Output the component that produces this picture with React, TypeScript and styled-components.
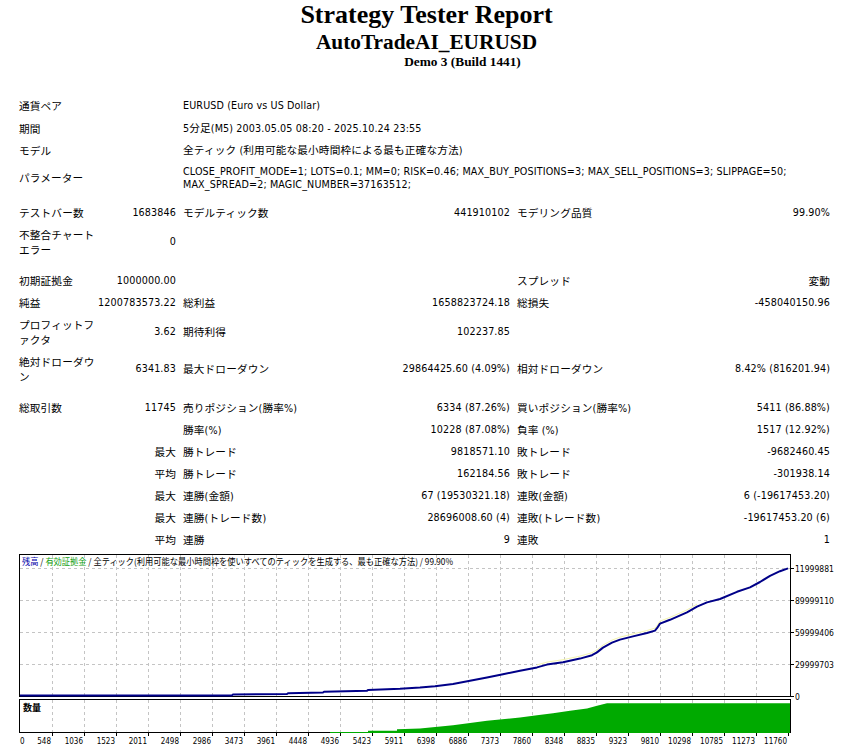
import React from "react";
import styled, { createGlobalStyle } from "styled-components";

const GlobalStyle = createGlobalStyle`
  html, body {
    margin: 0;
    padding: 0;
    background: #ffffff;
  }
  body {
    width: 853px;
    height: 752px;
    overflow: hidden;
    color: #000000;
    font-family: "DejaVu Sans Condensed", "Noto Sans CJK JP", sans-serif;
  }
`;

const Page = styled.div`
  width: 853px;
`;

const Header = styled.header`
  text-align: center;
  font-family: "Liberation Serif", "Times New Roman", serif;
  font-weight: bold;
`;

const Title = styled.div`
  font-size: 26px;
  line-height: 30px;
`;

const Subtitle = styled.div`
  font-size: 21.33px;
  line-height: 24px;
`;

const Build = styled.div`
  font-size: 13.33px;
  line-height: 16px;
  padding-left: 72px;
`;

const Table = styled.div`
  margin: 24px 0 0 16px;
  width: 820px;
  font-size: 10.6667px;
  letter-spacing: 0.13px;
`;

const Row = styled.div<{ $h: number }>`
  display: grid;
  grid-template-columns: 82px 82px 120px 214px 126px 1fr;
  height: ${(p) => p.$h}px;
  align-items: center;
`;

const Spacer = styled.div<{ $h: number }>`
  height: ${(p) => p.$h}px;
`;

const WideLabel = styled.div`
  grid-column: 1 / 3;
  padding-left: 3px;
  white-space: nowrap;
`;

const Info = styled.div`
  grid-column: 3 / 7;
  padding-left: 3px;
  line-height: 13px;
`;

const Label = styled.div`
  padding: 0 3px;
  line-break: anywhere;
`;

const SubLabel = styled.div`
  padding-left: 3px;
  white-space: nowrap;
`;

const Value = styled.div<{ $pad?: number }>`
  text-align: right;
  padding-right: ${(p) => p.$pad ?? 4}px;
  white-space: nowrap;
`;

const ChartSvg = styled.svg`
  display: block;
`;

const AxisText = styled.text`
  font-family: "DejaVu Sans Condensed", "Liberation Sans", sans-serif;
  font-size: 8px;
  fill: #000000;
`;

const PriceText = styled(AxisText)`
  font-size: 8.5px;
`;

const LegendText = styled.text`
  font-family: "Noto Sans CJK JP", sans-serif;
  font-size: 9px;
  fill: #000000;
`;

const VolumeText = styled.text`
  font-family: "Noto Sans CJK JP", sans-serif;
  font-size: 9px;
  font-weight: bold;
  fill: #000000;
`;

type Stat = [string, string, string, string, string, string];

const info: [string, string, number][] = [
  ["通貨ペア", "EURUSD (Euro vs US Dollar)", 23],
  ["期間", "5分足(M5) 2003.05.05 08:20 - 2025.10.24 23:55", 22],
  ["モデル", "全ティック (利用可能な最小時間枠による最も正確な方法)", 22],
  [
    "パラメーター",
    "CLOSE_PROFIT_MODE=1; LOTS=0.1; MM=0; RISK=0.46; MAX_BUY_POSITIONS=3; MAX_SELL_POSITIONS=3; SLIPPAGE=50; MAX_SPREAD=2; MAGIC_NUMBER=37163512;",
    33,
  ],
];

const groupA: [Stat, number][] = [
  [["テストバー数", "1683846", "モデルティック数", "441910102", "モデリング品質", "99.90%"], 22],
  [["不整合チャートエラー", "0", "", "", "", ""], 37],
];

const groupB: [Stat, number][] = [
  [["初期証拠金", "1000000.00", "", "", "スプレッド", "変動"], 22],
  [["純益", "1200783573.22", "総利益", "1658823724.18", "総損失", "-458040150.96"], 22],
  [["プロフィットファクタ", "3.62", "期待利得", "102237.85", "", ""], 37],
  [["絶対ドローダウン", "6341.83", "最大ドローダウン", "29864425.60 (4.09%)", "相対ドローダウン", "8.42% (816201.94)"], 37],
];

const groupC: [Stat, number][] = [
  [["総取引数", "11745", "売りポジション(勝率%)", "6334 (87.26%)", "買いポジション(勝率%)", "5411 (86.88%)"], 22],
  [["", "", "勝率(%)", "10228 (87.08%)", "負率 (%)", "1517 (12.92%)"], 22],
  [["", "最大", "勝トレード", "9818571.10", "敗トレード", "-9682460.45"], 22],
  [["", "平均", "勝トレード", "162184.56", "敗トレード", "-301938.14"], 22],
  [["", "最大", "連勝(金額)", "67 (19530321.18)", "連敗(金額)", "6 (-19617453.20)"], 22],
  [["", "最大", "連勝(トレード数)", "28696008.60 (4)", "連敗(トレード数)", "-19617453.20 (6)"], 22],
  [["", "平均", "連勝", "9", "連敗", "1"], 22],
];

const StatRow: React.FC<{ s: Stat; h: number }> = ({ s, h }) => (
  <Row $h={h}>
    <Label>{s[0]}</Label>
    <Value>{s[1]}</Value>
    <SubLabel>{s[2]}</SubLabel>
    <Value>{s[3]}</Value>
    <SubLabel>{s[4]}</SubLabel>
    <Value $pad={6}>{s[5]}</Value>
  </Row>
);

const balance: [number, number][] = [
  [20, 696.6], [120, 696.6], [232, 696.4], [233, 695.4], [287, 695.0], [288, 694.2],
  [323, 693.5], [324, 692.8], [367, 691.8], [368, 690.9], [400, 689.8], [420, 688.6],
  [435, 687.2], [453, 685.0], [470, 681.8], [487, 678.4], [503, 675.2], [520, 671.8],
  [537, 668.4], [547, 665.6], [563, 663.2], [580, 659.6], [592, 656.2], [597, 653.4],
  [603, 648.6], [612, 643.6], [620, 640.6], [633, 637.4], [647, 634.0], [655, 631.6],
  [657, 629.2], [660, 624.6], [670, 620.8], [687, 613.4], [697, 607.6], [707, 603.4],
  [720, 600.0], [737, 592.8], [750, 588.4], [760, 583.0], [770, 576.8], [780, 572.2],
  [788, 569.4],
];

const volume: [number, number][] = [
  [330, 733], [368, 733], [368, 731.8], [397, 731.8], [397, 730.2], [420, 729.4],
  [453, 726.2], [487, 721.8], [520, 718.4], [537, 716.2], [553, 714.2], [570, 711.8],
  [587, 709.4], [597, 706.8], [607, 704.2], [790, 704.2], [790, 734], [330, 734],
];

const xLabels = [
  "548", "1036", "1523", "2011", "2498", "2986", "3473", "3961", "4448", "4936", "5423", "5911",
  "6398", "6886", "7373", "7860", "8348", "8835", "9323", "9810", "10298", "10785", "11273", "11760",
];

const priceLines: [number, string][] = [
  [569.5, "11999881"],
  [601.5, "89999110"],
  [633.5, "59999406"],
  [665.5, "29999703"],
  [697.5, "0"],
];

const gridXs = Array.from({ length: 23 }, (_, k) => 52 + 32 * k + 0.5);

const Chart: React.FC = () => {
  const pts = balance.map(([x, y]) => `${x},${y}`).join(" ");
  const eq = balance
    .filter(([x]) => x > 520 && x < 700)
    .map(([x, y]) => `${x},${y - 2.5}`)
    .join(" ");
  const vol = volume.map(([x, y]) => `${x},${y}`).join(" ");
  return (
    <ChartSvg width={853} height={201} viewBox="0 551 853 201">
      <rect x={19.5} y={555.5} width={771} height={142} fill="#ffffff" stroke="#000000" strokeWidth={1} />
      <rect x={19.5} y={700.5} width={771} height={33} fill="#ffffff" stroke="#000000" strokeWidth={1} />
      {gridXs.map((x) => (
        <g key={x}>
          <line x1={x} y1={556} x2={x} y2={697} stroke="#c4c4c4" strokeDasharray="3 3" />
          <line x1={x} y1={701} x2={x} y2={733} stroke="#c4c4c4" strokeDasharray="3 3" />
        </g>
      ))}
      {priceLines.slice(0, 4).map(([y]) => (
        <line key={y} x1={20} y1={y} x2={790} y2={y} stroke="#c4c4c4" strokeDasharray="3 3" />
      ))}
      {priceLines.map(([y, t]) => (
        <g key={t}>
          <line x1={791} y1={y} x2={794} y2={y} stroke="#000000" />
          <PriceText x={795} y={y + 3.5}>{t}</PriceText>
        </g>
      ))}
      {[...gridXs, 788.5].map((x) => (
        <line key={`t${x}`} x1={x} y1={734} x2={x} y2={737} stroke="#000000" />
      ))}
      <AxisText x={20} y={745}>0</AxisText>
      {xLabels.map((t, k) => (
        <AxisText key={t} x={51 + 32 * k} y={745} textAnchor="end">
          {t}
        </AxisText>
      ))}
      <polygon points={vol} fill="#00aa00" />
      <polyline points={eq} fill="none" stroke="#f4f4b0" strokeWidth={1} />
      <polyline points={pts} fill="none" stroke="#000088" strokeWidth={2} strokeLinejoin="round" />
      <LegendText x={22} y={565.5} textLength={431} lengthAdjust="spacingAndGlyphs">
        <tspan fill="#0000a8">残高</tspan> / <tspan fill="#10a010">有効証拠金</tspan> / 全ティック(利用可能な最小時間枠を使いすべてのティックを生成する、最も正確な方法) / 99.90%
      </LegendText>
      <VolumeText x={23} y={712}>数量</VolumeText>
    </ChartSvg>
  );
};

export default function App() {
  return (
    <Page lang="ja">
      <GlobalStyle />
      <Header>
        <Title>Strategy Tester Report</Title>
        <Subtitle>AutoTradeAI_EURUSD</Subtitle>
        <Build>Demo 3 (Build 1441)</Build>
      </Header>
      <Table>
        {info.map(([l, v, h]) => (
          <Row key={l} $h={h}>
            <WideLabel>{l}</WideLabel>
            <Info>{v}</Info>
          </Row>
        ))}
        <Spacer $h={7} />
        {groupA.map(([s, h], i) => (
          <StatRow key={`a${i}`} s={s} h={h} />
        ))}
        <Spacer $h={9} />
        {groupB.map(([s, h], i) => (
          <StatRow key={`b${i}`} s={s} h={h} />
        ))}
        <Spacer $h={9} />
        {groupC.map(([s, h], i) => (
          <StatRow key={`c${i}`} s={s} h={h} />
        ))}
      </Table>
      <Chart />
    </Page>
  );
}
